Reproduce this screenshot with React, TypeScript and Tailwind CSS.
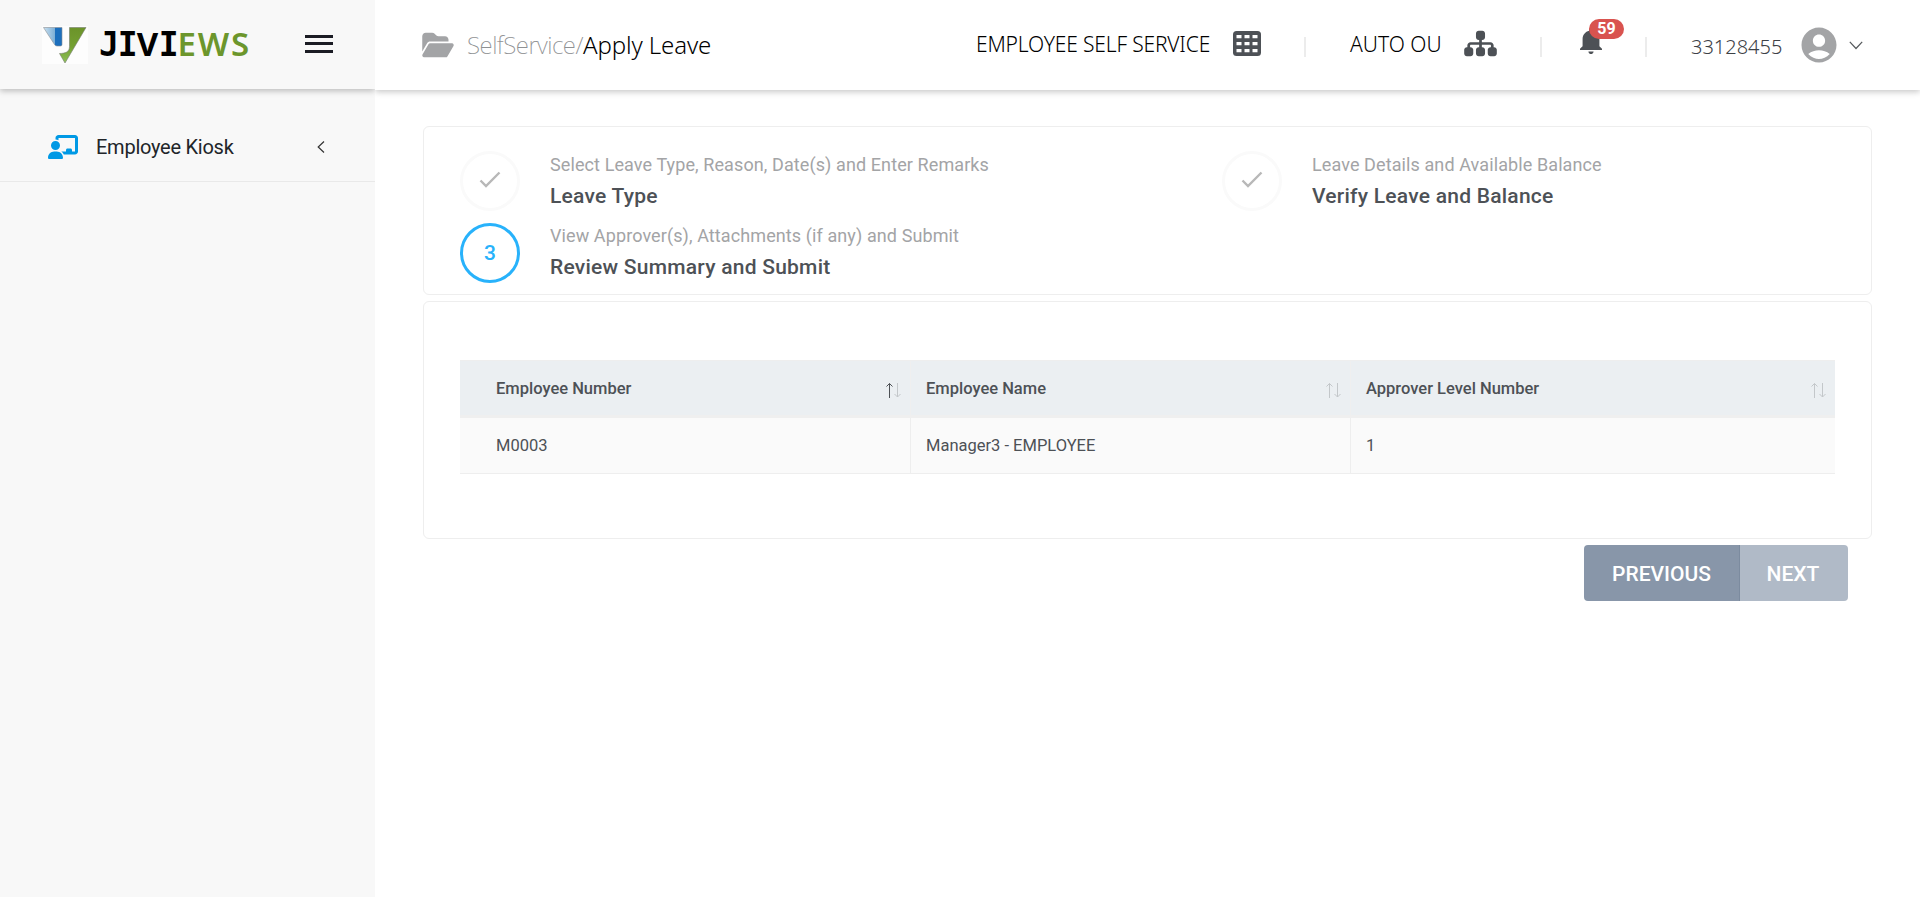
import type { ReactNode } from "react";
import { FaFolderOpen, FaSitemap, FaChalkboardUser } from "react-icons/fa6";
import { IoMdNotifications } from "react-icons/io";
import { MdAccountCircle } from "react-icons/md";

function Logo() {
  return (
    <div className="flex items-center">
      <svg width="46" height="38" viewBox="0 0 46 38" className="shrink-0 bg-[#fdfdfd]">
        <defs>
          <linearGradient id="blue" x1="0" x2="1">
            <stop offset="0" stopColor="#c9e0f0" />
            <stop offset="0.6" stopColor="#7fb0d6" />
            <stop offset="0.61" stopColor="#1c6fbd" />
            <stop offset="1" stopColor="#1c6fbd" />
          </linearGradient>
          <linearGradient id="green" x1="0" y1="0" x2="0" y2="1">
            <stop offset="0" stopColor="#6b9329" />
            <stop offset="0.55" stopColor="#74a032" />
            <stop offset="1" stopColor="#8fc25a" />
          </linearGradient>
        </defs>
        <path d="M1.500 1.500H20V18.500Q20 20 18.500 20H15Q13.500 20 12.700 18.800Z" fill="url(#blue)" stroke="#8a8f94" strokeWidth="0.6" />
        <path d="M27.500 1.500H44L23 37L17.500 27.500C24 27.500 27.500 25.500 27.500 20.500Z" fill="url(#green)" stroke="#777c72" strokeWidth="0.6" />
      </svg>
      <div className="-mt-px ml-[11px] flex items-baseline font-bold leading-none text-[33px]">
        <span className="font-['DejaVu_Sans_Mono',monospace] tracking-[-1px]">JI</span>
        <span className="font-['Noto_Sans',sans-serif] tracking-[0.500px]">V</span>
        <span className="font-['DejaVu_Sans_Mono',monospace] tracking-[-1px]">I</span>
        <span className="font-['Noto_Sans',sans-serif] font-semibold tracking-[1.800px] text-[#6c962c]">EWS</span>
      </div>
    </div>
  );
}

function Sidebar() {
  return (
    <aside className="w-[375px] shrink-0 overflow-hidden bg-[#f8f8f8]">
      <div className="flex h-[89px] items-center justify-between pr-[42px] pl-[42px] shadow-[0_2px_6px_rgba(0,0,0,0.25)]">
        <Logo />
        <div className="-mt-0.5 flex flex-col gap-[4.500px]">
          <span className="h-[3px] w-7 bg-[#1b1c24]" />
          <span className="h-[3px] w-7 bg-[#1b1c24]" />
          <span className="h-[3px] w-7 bg-[#1b1c24]" />
        </div>
      </div>
      <div className="mt-[22px] flex h-[71px] items-center border-b border-[#e9e9e9] pt-0.5 pr-[50px] pl-12 text-[#212529]">
        <FaChalkboardUser className="h-6 w-[30px] text-[#0099e5]" />
        <span className="ml-[18px] text-xl leading-none tracking-[-0.250px]">Employee Kiosk</span>
        <svg width="8" height="12" viewBox="0 0 8 12" className="ml-auto" fill="none" stroke="#333" strokeWidth="1.200">
          <path d="M7 0.500L1.200 6L7 11.500" />
        </svg>
      </div>
    </aside>
  );
}

function Separator() {
  return <span className="mt-[3px] h-5 w-0.5 shrink-0 bg-[#ececec]" />;
}

function TableIcon() {
  return (
    <svg width="28" height="25" viewBox="0 0 28 25" className="mr-px ml-[23px] -mt-[3px]">
      <rect width="28" height="25" rx="3.500" fill="#4d5156" />
      <path fill="#fff" d="M3.500 4h5v3.200h-5zM11.500 4h5v3.200h-5zM19.500 4h5v3.200h-5zM3.500 11h5v3.200h-5zM11.500 11h5v3.200h-5zM19.500 11h5v3.200h-5zM3.500 18h5v3.200h-5zM11.500 18h5v3.200h-5zM19.500 18h5v3.200h-5z" />
    </svg>
  );
}

function Header() {
  return (
    <header className="flex h-[90px] items-center pl-[47px] font-['Noto_Sans',sans-serif] shadow-[0_2px_6px_rgba(0,0,0,0.22)]">
      <FaFolderOpen className="h-7 w-8 text-[#a3a4a6]" />
      <div className="ml-[13px] flex w-[509px] text-2xl leading-none">
        <span className="font-extralight tracking-[-0.500px] text-[#8f9193]">SelfService/</span>
        <span className="font-light tracking-[-0.100px] text-black">Apply Leave</span>
      </div>
      <span className="-mt-px w-[234px] text-[21px] leading-none font-light tracking-[-0.170px] whitespace-nowrap text-black">EMPLOYEE SELF SERVICE</span>
      <TableIcon />
      <span className="w-[42px]" />
      <Separator />
      <span className="-mt-px ml-[44px] w-[90px] text-[21px] leading-none font-light whitespace-nowrap text-black">AUTO OU</span>
      <FaSitemap className="-mt-[3px] mr-[43px] ml-[24px] h-[29px] w-[33px] text-[#4d5156]" />
      <Separator />
      <div className="relative -mt-2 mr-[38px] ml-[33px]">
        <IoMdNotifications className="size-8 text-[#4d5156]" />
        <span className="absolute -top-1.5 left-3.5 flex h-5 w-[35px] items-center justify-center rounded-full bg-[#d9534f] font-[Roboto,sans-serif] text-base font-bold text-white">59</span>
      </div>
      <Separator />
      <span className="mt-[3px] ml-[44px] text-xl leading-none font-light text-[#3d4146]">33128455</span>
      <MdAccountCircle className="ml-4 size-[42px] text-[#a3a4a6]" />
      <svg width="14" height="9" viewBox="0 0 14 9" className="ml-[9px]" fill="none" stroke="#55595c" strokeWidth="1.200">
        <path d="M0.800 0.800L7 7.500L13.200 0.800" />
      </svg>
    </header>
  );
}

function Step({ hint, title, badge, active }: { hint: string; title: string; badge: ReactNode; active?: boolean }) {
  return (
    <div className="flex">
      <div className={active ? "mt-px flex size-[60px] items-center justify-center rounded-full border-[3px] border-[#28b2fb] pt-0.5 text-[21px] font-medium text-[#28b2fb]" : "flex size-[60px] items-center justify-center rounded-full border-[3px] border-[#fafafa]"}>
        {badge}
      </div>
      <div className="ml-[30px]">
        <div className="text-lg leading-7 tracking-[0.100px] text-[#a3a4a6]">{hint}</div>
        <div className="mt-[3px] text-[21px] leading-7 font-medium tracking-[0.240px] text-[#4d5156]">{title}</div>
      </div>
    </div>
  );
}

function Check() {
  return (
    <svg width="22" height="18" viewBox="0 0 22 18" className="-mt-[3px]" fill="none" stroke="#b8b8b8" strokeWidth="2.400">
      <path d="M1.500 9.500L7 15L20.500 1.500" />
    </svg>
  );
}

function SortArrows({ sorted }: { sorted?: boolean }) {
  return (
    <svg width="17" height="17" viewBox="0 0 17 17" fill="none" strokeWidth="1">
      <path d="M4.500 16V1.500M1.500 4.500L4.500 1.500L7.500 4.500" stroke={sorted ? "#4d5156" : "#c3c7ca"} />
      <path d="M12.500 1V15M9.500 12L12.500 15L15.500 12" stroke="#c3c7ca" />
    </svg>
  );
}

const columns = ["Employee Number", "Employee Name", "Approver Level Number"];
const cells = ["M0003", "Manager3 - EMPLOYEE", "1"];

function ApproverTable() {
  return (
    <div className="text-[#4d5156]">
      <div className="grid h-[58px] grid-cols-[451px_440px_1fr] border-t border-b-[3px] border-t-[#eee] border-b-[#efefef] bg-[#ebeff2]">
        {columns.map((c, i) => (
          <div key={c} className={"flex items-center justify-between pt-0.5 pr-2 text-[16.500px] font-medium " + (i === 0 ? "pl-9" : "pl-[15px]") + (i < 2 ? " border-r border-[#efefef]" : "")}>
            <span>{c}</span>
            <span className="mt-0.5"><SortArrows sorted={i === 0} /></span>
          </div>
        ))}
      </div>
      <div className="grid h-14 grid-cols-[451px_440px_1fr] border-b border-[#eee] bg-[#fafafa]">
        {cells.map((c, i) => (
          <div key={c} className={"flex items-center pt-0.5 text-[16.500px] " + (i === 0 ? "pl-9" : "pl-[15px]") + (i < 2 ? " border-r border-[#eee]" : "")}>
            {c}
          </div>
        ))}
      </div>
    </div>
  );
}

export default function App() {
  return (
    <div className="flex h-[897px] overflow-hidden bg-white font-[Roboto,sans-serif]">
      <Sidebar />
      <main className="flex-1 overflow-hidden">
        <Header />
        <div className="pt-9 pr-12 pl-12">
          <section className="grid h-[169px] grid-cols-[762px_1fr] content-start gap-y-[11px] rounded-md border border-[#eee] pt-6 pl-9">
            <Step hint="Select Leave Type, Reason, Date(s) and Enter Remarks" title="Leave Type" badge={<Check />} />
            <Step hint="Leave Details and Available Balance" title="Verify Leave and Balance" badge={<Check />} />
            <Step hint="View Approver(s), Attachments (if any) and Submit" title="Review Summary and Submit" badge="3" active />
          </section>
          <section className="mt-1.5 h-[238px] rounded-md border border-[#eee] px-9 pt-[58px]">
            <ApproverTable />
          </section>
          <div className="mt-1.5 mr-6 flex h-14 justify-end text-[21px] font-medium text-white">
            <button className="w-[156px] rounded-l-sm border-r border-[#7c8b9f] bg-[#8896a9] pt-[3px]">PREVIOUS</button>
            <button className="w-[108px] rounded-r-sm bg-[#b0bac7] pt-[3px] pr-0.5">NEXT</button>
          </div>
        </div>
      </main>
    </div>
  );
}
